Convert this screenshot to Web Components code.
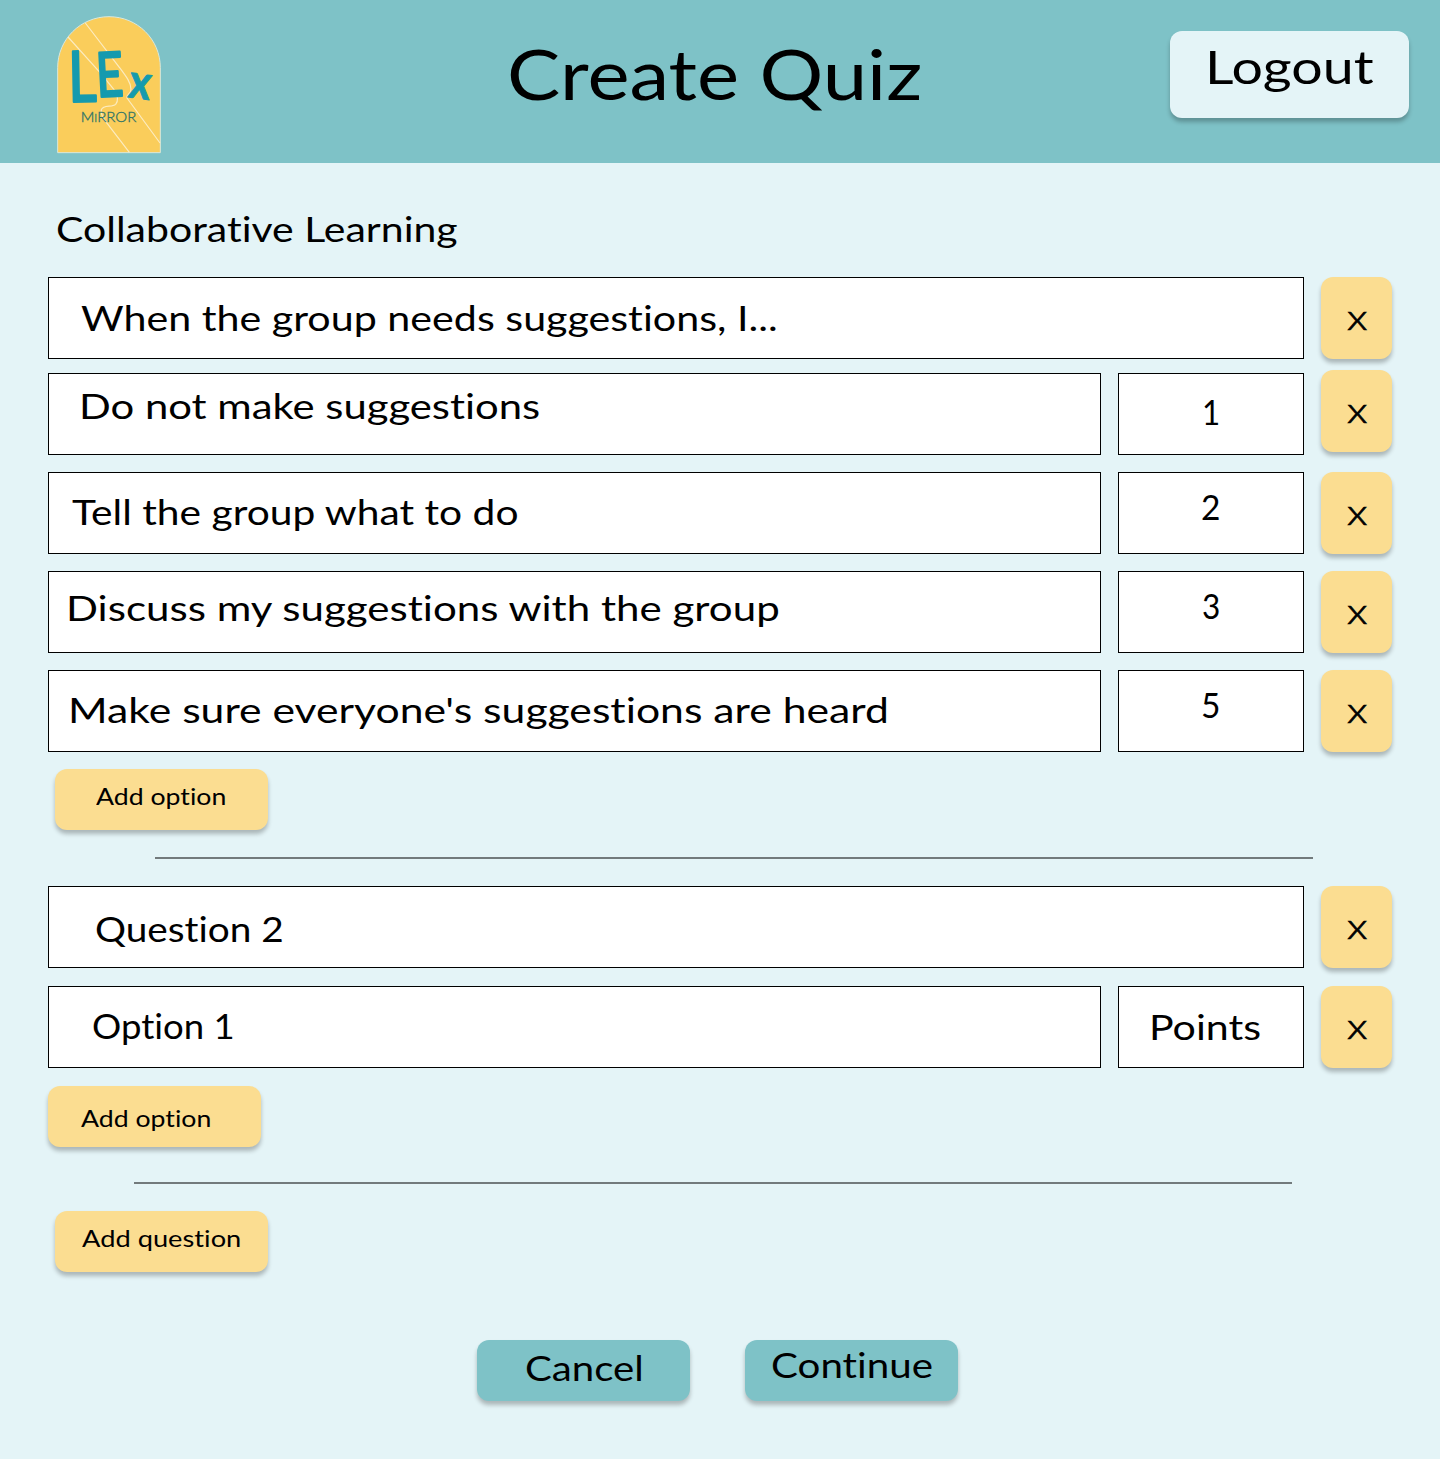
<!DOCTYPE html>
<html lang="en">
<head>
<meta charset="utf-8">
<title>Create Quiz</title>
<style>
  body { margin: 0; font-family: Lato, "Open Sans", sans-serif; color: #000; background: #e4f4f7; }
</style>
</head>
<body>
<quiz-page></quiz-page>
<script>
const define = (name, html, setup) => customElements.define(name, class extends HTMLElement {
  connectedCallback() {
    if (this.shadowRoot) return;
    this.attachShadow({ mode: 'open' }).innerHTML = html;
    if (setup) setup(this, this.shadowRoot);
  }
});

// One line of text, stretched to the inked width `w`; `x` and `b` are the ink start and the baseline inside the parent.
const pen = document.createElement('canvas').getContext('2d');
define('ui-label', `<style>
  :host { display: block; flex: none; white-space: nowrap; line-height: 1; overflow: visible; }
  span { display: inline-block; transform-origin: 0 0; white-space: pre; vertical-align: top; letter-spacing: .01px; font-variant-ligatures: none; }
</style><span></span>`, (el, root) => {
  const n = k => parseFloat(el.getAttribute(k));
  const size = n('size') || 35.5, text = el.getAttribute('text'), weight = el.getAttribute('weight') || 400;
  pen.font = `${weight} ${size}px Lato, "Open Sans", sans-serif`;
  pen.letterSpacing = '0.01px';
  const m = pen.measureText(text);
  const scale = n('w') / (m.actualBoundingBoxRight + m.actualBoundingBoxLeft);
  const span = root.querySelector('span');
  span.textContent = text;
  span.style.transform = `scaleX(${scale})`;
  el.style.cssText = `font-size:${size}px;font-weight:${weight};height:${size}px;width:${n('w')}px;` +
    `margin-left:${n('x') + m.actualBoundingBoxLeft * scale}px;margin-top:${n('b') + 1 - size * 0.887}px`;
});

define('ui-button', `<style>
  :host { display: flex; align-items: flex-start; flex: none; box-sizing: border-box; width: 213px; height: 61px;
    border-radius: 12px; background: #fbdd91; box-shadow: 0 4px 4px rgba(0,0,0,.25); cursor: pointer; }
  :host([kind="teal"]) { background: #7ec2c7; }
  :host([kind="light"]) { background: #e4f4f7; width: 239px; height: 87px; }
  :host([kind="remove"]) { width: 71px; height: 82px; }
</style><slot></slot>`);

define('ui-field', `<style>
  :host { display: flex; align-items: flex-start; flex: 1; box-sizing: border-box; height: 82px; background: #fff; box-shadow: inset 0 0 0 1px #000; }
  :host([points]) { flex: 0 0 186px; }
</style><slot></slot>`);

define('quiz-row', `<style>
  :host { display: flex; gap: 17px; height: 82px; }
  .raised { margin-top: -3px; }
  ui-label { -webkit-text-stroke: .7px #000; }
</style><slot></slot><ui-button kind="remove" aria-label="Remove"><ui-label text="x" x="25.5" b="52" w="20.5" size="36" weight="300"></ui-label></ui-button>`,
(el, root) => { if (el.hasAttribute('raised')) root.querySelector('ui-button').className = 'raised'; });

define('ui-divider', `<style>:host { display: block; width: 1158px; height: 2px; background: #727a7c; }</style>`);

define('lex-logo', `<style>
  :host { display: block; width: 105px; height: 138px; }
  svg { display: block; width: 105px; height: 138px; }
</style>
<svg viewBox="51 47 315 414" role="img" aria-label="LEx Mirror">
  <path d="M53 457V202C53 117 122 49 207 49S361 117 361 202V457Z" fill="#facd5b" stroke="#d9e8dc" stroke-width="3"/>
  <g fill="none" stroke="#fcecc0" stroke-width="3.5">
    <path d="M136 68L238 201C259 229 273 247 273 267C273 282 258 282 261 293L360 428"/>
    <path d="M84 110L185 222L222 268C235 284 235 303 227 312C216 322 190 312 184 328C180 344 194 359 202 370L268 456"/>
  </g>
  <g fill="#159aae" stroke="#159aae" stroke-linejoin="round" font-family="Lato, sans-serif">
    <text transform="translate(86 304) rotate(-1) scale(.78 1)" font-size="210" font-weight="400" stroke-width="8">L</text>
    <text transform="translate(172 290) rotate(-3) scale(.76 1)" font-size="184" font-weight="400" stroke-width="8">E</text>
    <text transform="translate(262 290) rotate(8) scale(.88 1)" font-size="144" font-weight="700" stroke-width="3">x</text>
  </g>
  <text x="122" y="366" font-family="Lato, sans-serif" font-size="43" font-weight="300" fill="#2e7468" stroke="#2e7468" stroke-width="1" textLength="167" lengthAdjust="spacingAndGlyphs">M<tspan font-size="32">I</tspan>RROR</text>
</svg>`);

define('page-header', `<style>
  :host { display: flex; align-items: flex-start; box-sizing: border-box; height: 163px; padding: 0 31px 0 57px; background: #7ec2c7; }
  lex-logo { margin-top: 16px; }
  .title { flex: 1; display: flex; }
  ui-button { margin-top: 31px; }
</style>
<lex-logo></lex-logo>
<div class="title"><ui-label text="Create Quiz" x="348" b="99.5" w="410" size="70"></ui-label></div>
<ui-button kind="light"><ui-label text="Logout" x="40" b="52.5" w="164" size="47"></ui-label></ui-button>`);

define('quiz-page', `<style>
  :host { display: block; width: 1440px; height: 1459px; background: #e4f4f7; overflow: hidden; }
  main { display: flex; flex-direction: column; padding: 0 48px; }
  .heading { height: 114px; display: flex; }
  .question { display: flex; flex-direction: column; }
  .options { display: flex; flex-direction: column; gap: 17px; margin-top: 14px; }
  .second { margin-top: 27px; }
  .second .options { margin-top: 18px; }
  .inset { margin-left: 7px; }
  .actions { display: flex; justify-content: center; gap: 55px; margin-top: 68px; padding-right: 5px; }
</style>
<page-header></page-header>
<main>
  <div class="heading"><ui-label text="Collaborative Learning" x="9" b="78" w="400"></ui-label></div>
  <section class="question">
    <quiz-row><ui-field><ui-label text="When the group needs suggestions, I..." x="33" b="53" w="695"></ui-label></ui-field></quiz-row>
    <div class="options">
      <quiz-row raised><ui-field><ui-label text="Do not make suggestions" x="34.5" b="45" w="456"></ui-label></ui-field><ui-field points><ui-label text="1" x="86" b="51" w="15"></ui-label></ui-field></quiz-row>
      <quiz-row><ui-field><ui-label text="Tell the group what to do" x="24" b="52" w="446"></ui-label></ui-field><ui-field points><ui-label text="2" x="84" b="47" w="17"></ui-label></ui-field></quiz-row>
      <quiz-row><ui-field><ui-label text="Discuss my suggestions with the group" x="22" b="49" w="711"></ui-label></ui-field><ui-field points><ui-label text="3" x="85" b="47" w="16"></ui-label></ui-field></quiz-row>
      <quiz-row><ui-field><ui-label text="Make sure everyone's suggestions are heard" x="24" b="52" w="815"></ui-label></ui-field><ui-field points><ui-label text="5" x="84" b="47" w="17"></ui-label></ui-field></quiz-row>
      <ui-button class="inset"><ui-label text="Add option" x="41" b="36" w="129" size="23.5"></ui-label></ui-button>
    </div>
  </section>
  <ui-divider style="margin: 27px 0 0 107px"></ui-divider>
  <section class="question second">
    <quiz-row><ui-field><ui-label text="Question 2" x="48" b="55" w="186"></ui-label></ui-field></quiz-row>
    <div class="options" style="gap: 18px">
      <quiz-row><ui-field><ui-label text="Option 1" x="45" b="52" w="140"></ui-label></ui-field><ui-field points><ui-label text="Points" x="34" b="53" w="107"></ui-label></ui-field></quiz-row>
      <ui-button><ui-label text="Add option" x="33" b="41" w="129" size="23.5"></ui-label></ui-button>
    </div>
  </section>
  <ui-divider style="margin: 35px 0 27px 86px"></ui-divider>
  <ui-button class="inset"><ui-label text="Add question" x="27" b="36" w="158" size="23.5"></ui-label></ui-button>
  <div class="actions">
    <ui-button kind="teal"><ui-label text="Cancel" x="49" b="40" w="115"></ui-label></ui-button>
    <ui-button kind="teal"><ui-label text="Continue" x="27" b="37" w="160"></ui-label></ui-button>
  </div>
</main>`);
</script>
</body>
</html>
